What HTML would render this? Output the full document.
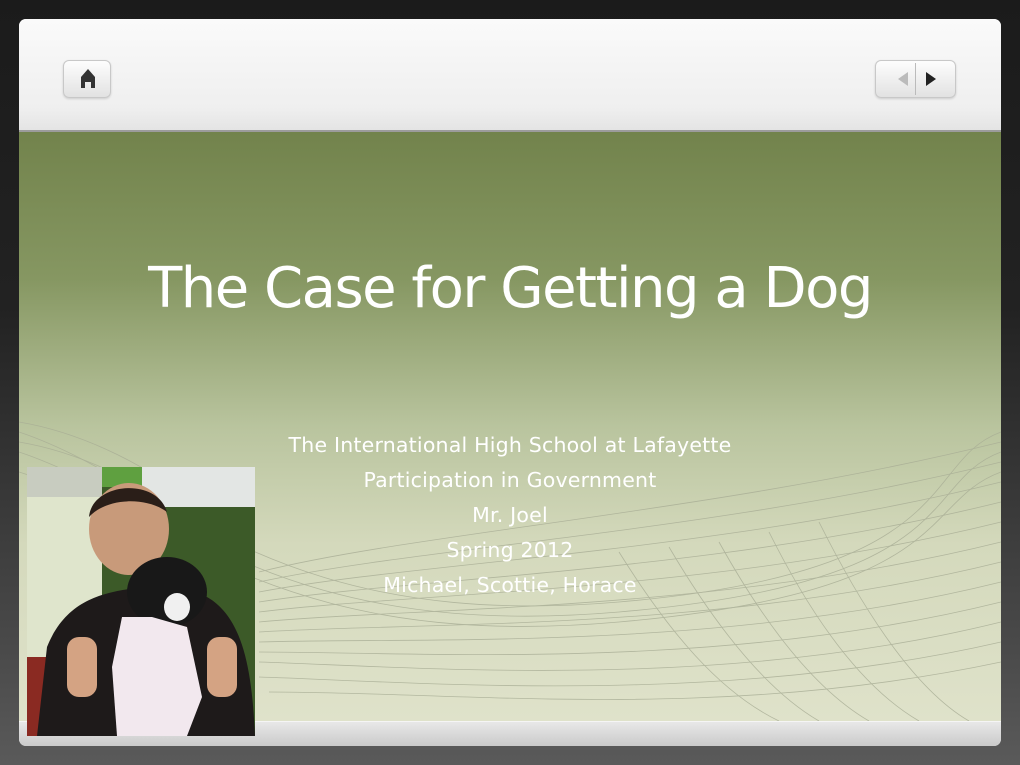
<!DOCTYPE html>
<html><head><meta charset="utf-8"><style>
body{margin:0;width:1020px;height:765px;overflow:hidden;background:linear-gradient(180deg,#1b1b1b 0%,#222 40%,#4a4a4a 85%,#5a5a5a 100%);font-family:"Liberation Sans",sans-serif;position:relative}
#panel{position:absolute;left:19px;top:19px;width:982px;height:727px;border-radius:7px;background:#ddd;overflow:hidden}
#hdr{position:absolute;left:0;top:0;width:982px;height:111px;background:linear-gradient(180deg,#fafafa,#efefef 80%,#e4e4e4);border-bottom:2px solid #9c9c9c}
#slide{position:absolute;left:0;top:113px;width:982px;height:589px;background:linear-gradient(180deg,#72834c 0%,#869762 25%,#b9c49e 50%,#d4d9bc 70%,#dfe2ca 100%)}
#foot{position:absolute;left:0;top:702px;width:982px;height:25px;background:linear-gradient(180deg,#e8e8e8,#c9c9c9);border-top:1px solid #f5f5f5}
.btn{position:absolute;top:41px;height:36px;border:1px solid #c8c8c8;border-radius:6px;background:linear-gradient(180deg,#fdfdfd,#e2e2e2);box-shadow:0 1px 2px rgba(0,0,0,.15)}
h1{position:absolute;left:0;width:982px;top:124px;margin:0;text-align:center;font-weight:normal;font-size:56px;color:#fff;font-family:"DejaVu Sans","Liberation Sans",sans-serif;letter-spacing:-1.5px}
.sub{position:absolute;left:0;width:1020px;top:428px;text-align:center;color:#fff;font-family:"DejaVu Sans",sans-serif;font-size:20.5px;line-height:35px;letter-spacing:0.2px}
</style></head><body>
<div id="panel">
<div id="hdr">
 <div class="btn" style="left:44px;width:46px"><svg width="46" height="36"><path d="M24 8 L31 16 L31 27 L27 27 L27 21 L21 21 L21 27 L17 27 L17 16 Z" fill="#333"/></svg></div>
 <div class="btn" style="left:856px;width:79px"><svg width="79" height="36"><path d="M32 11 L22 18 L32 25Z" fill="#bbb"/><line x1="39.5" y1="2" x2="39.5" y2="34" stroke="#bbb"/><path d="M50 11 L60 18 L50 25Z" fill="#222"/></svg></div>
</div>
<div id="slide">
<svg width="982" height="589" style="position:absolute;left:0;top:0" fill="none" stroke="#a8ad95" stroke-width="0.8" opacity="0.8">
<g>
<path d="M0 300 C150 350 250 500 600 470 S900 330 982 300"/>
<path d="M0 320 C150 370 250 510 600 480 S900 350 982 320"/>
<path d="M0 340 C160 390 260 520 600 490 S900 370 982 340"/>
<path d="M240 440 C400 400 700 380 982 310"/>
<path d="M240 450 C400 415 700 400 982 330"/>
<path d="M240 460 C400 430 700 420 982 350"/>
<path d="M240 470 C400 445 700 440 982 370"/>
<path d="M240 480 C400 460 700 460 982 390"/>
<path d="M240 490 C400 475 700 480 982 410"/>
<path d="M240 500 C400 490 700 500 982 430"/>
<path d="M240 510 C400 505 700 520 982 450"/>
<path d="M240 520 C400 520 700 540 982 470"/>
<path d="M240 530 C400 535 700 560 982 490"/>
<path d="M240 545 C400 550 700 575 982 510"/>
<path d="M250 560 C450 560 700 590 982 530"/>
<path d="M600 420 C650 500 700 560 760 589"/>
<path d="M650 415 C700 500 750 560 800 589"/>
<path d="M700 410 C750 500 800 560 850 589"/>
<path d="M750 400 C800 500 850 560 900 589"/>
<path d="M800 390 C850 490 900 560 950 589"/>
<path d="M0 290 C60 300 120 330 160 360"/>
<path d="M0 310 C60 320 120 350 160 380"/>
</g></svg>
<h1>The Case for Getting a Dog</h1>
</div>
<div id="foot"></div>
</div>
<div class="sub"><div>The International High School at Lafayette</div><div>Participation in Government</div><div>Mr. Joel</div><div>Spring 2012</div><div>Michael, Scottie, Horace</div></div>
<svg style="position:absolute;left:27px;top:467px" width="228" height="269">
<rect width="228" height="269" fill="#3c5a28"/>
<rect x="0" y="0" width="75" height="190" fill="#dfe5cc"/>
<rect x="0" y="0" width="75" height="30" fill="#c8ccc0"/>
<rect x="115" y="0" width="113" height="40" fill="#e3e6e4"/>
<rect x="75" y="0" width="40" height="20" fill="#5fa040"/>
<rect x="0" y="190" width="75" height="79" fill="#8a2a22"/>
<ellipse cx="102" cy="62" rx="40" ry="46" fill="#c89a7a"/>
<path d="M62 50 C65 15 130 10 140 45 C120 30 80 30 62 50Z" fill="#2a1e18"/>
<path d="M10 269 L20 180 C40 130 80 125 115 120 L180 130 C215 150 225 200 228 269Z" fill="#1e1a1a"/>
<ellipse cx="140" cy="125" rx="40" ry="35" fill="#181818"/>
<path d="M95 150 L125 150 L160 160 L175 230 L160 269 L90 269 L85 200Z" fill="#f2e8ee"/>
<ellipse cx="150" cy="140" rx="13" ry="14" fill="#f0f0f0"/>
<rect x="40" y="170" width="30" height="60" rx="12" fill="#d4a383"/>
<rect x="180" y="170" width="30" height="60" rx="12" fill="#d4a383"/>
</svg>
</body></html>
